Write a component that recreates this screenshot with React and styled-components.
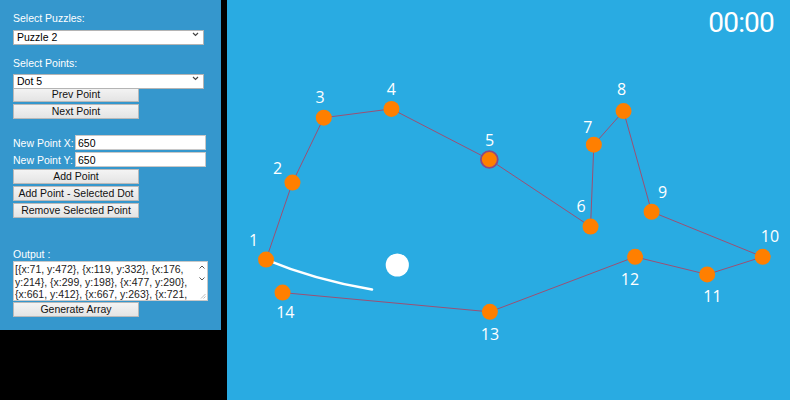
import React, { useState } from "react";
import styled, { createGlobalStyle } from "styled-components";

const GlobalStyle = createGlobalStyle`
  html, body {
    margin: 0;
    padding: 0;
    background: #000;
  }
  body {
    font-family: "Liberation Sans", Arial, sans-serif;
  }
`;

const SCALE = 0.55;

// original canvas coordinates, label positions are on-screen (canvas space)
const dots = [
  { x: 71, y: 472, lx: 26.5, ly: 246 },
  { x: 119, y: 332, lx: 50.5, ly: 174 },
  { x: 176, y: 214, lx: 93, ly: 103 },
  { x: 299, y: 198, lx: 164.3, ly: 95 },
  { x: 477, y: 290, lx: 262.5, ly: 145.7 },
  { x: 661, y: 412, lx: 354, ly: 211.7 },
  { x: 667, y: 263, lx: 360.8, ly: 132.7 },
  { x: 721, y: 202, lx: 394.5, ly: 95 },
  { x: 772, y: 385, lx: 435.5, ly: 198.3 },
  { x: 974, y: 467, lx: 543, ly: 241.7 },
  { x: 873, y: 499, lx: 485.5, ly: 301.7 },
  { x: 742, y: 467, lx: 403, ly: 285 },
  { x: 478, y: 567, lx: 263, ly: 340 },
  { x: 101, y: 532, lx: 58.3, ly: 318.3 },
];

const outputText =
  "[" + dots.map((d) => `{x:${d.x}, y:${d.y}}`).join(", ") + "]";

const Page = styled.div`
  display: flex;
  align-items: flex-start;
  gap: 6px;
  width: 790px;
  height: 400px;
  overflow: hidden;
`;

const Panel = styled.div`
  width: 221px;
  flex-shrink: 0;
  background: #3597cd;
  box-sizing: border-box;
  padding: 11px 0 13px 13px;
  display: flex;
  flex-direction: column;
  align-items: flex-start;
`;

const Label = styled.label`
  display: block;
  color: #fff;
  font-size: 10.5px;
  line-height: 14px;
  height: 14px;
  margin-top: ${(p) => p.$top || 0}px;
`;

const SelectWrap = styled.div`
  position: relative;
  width: 191px;
  height: 15px;
  margin-top: ${(p) => p.$top || 0}px;
`;

const Select = styled.select`
  appearance: none;
  width: 100%;
  height: 100%;
  box-sizing: border-box;
  border: 1px solid #b4b4b4;
  border-radius: 0;
  background: #fff;
  font-family: "Liberation Sans", Arial, sans-serif;
  font-size: 10.5px;
  color: #000;
  padding: 0 0 0 3px;
  outline: none;
`;

const Chevron = styled.svg`
  position: absolute;
  right: 5px;
  top: 5px;
  pointer-events: none;
`;

const Button = styled.button`
  width: 126px;
  height: 15px;
  box-sizing: border-box;
  margin-top: ${(p) => p.$top || 0}px;
  padding: 0;
  border: 1px solid #b9b9b9;
  background: linear-gradient(#f4f4f4, #e4e4e4);
  font-family: "Liberation Sans", Arial, sans-serif;
  font-size: 10.5px;
  line-height: 13px;
  color: #111;
  cursor: pointer;
`;

const FieldRow = styled.div`
  display: flex;
  align-items: center;
  margin-top: ${(p) => p.$top || 0}px;
`;

const RowLabel = styled.span`
  width: 62px;
  color: #fff;
  font-size: 10.5px;
`;

const TextInput = styled.input`
  width: 131px;
  height: 15px;
  box-sizing: border-box;
  border: 1px solid #c8c8c8;
  padding: 0 2px;
  font-family: "Liberation Sans", Arial, sans-serif;
  font-size: 10.5px;
  color: #000;
  outline: none;
`;

const OutputBox = styled.div`
  display: flex;
  width: 195px;
  height: 40px;
  box-sizing: border-box;
  border: 1px solid #c8c8c8;
  background: #fff;
`;

const OutputText = styled.textarea`
  flex: 1;
  border: none;
  resize: none;
  overflow: hidden;
  padding: 1px 0 0 1px;
  font-family: "Liberation Sans", Arial, sans-serif;
  font-size: 10.5px;
  line-height: 12.6px;
  color: #222;
  outline: none;
`;

const ScrollRail = styled.div`
  width: 10px;
  display: flex;
  flex-direction: column;
  align-items: center;
  padding-top: 3px;
  gap: 8px;
  position: relative;
`;

const Grip = styled.svg`
  position: absolute;
  right: 1px;
  bottom: 1px;
`;

const Stage = styled.div`
  position: relative;
  width: 563px;
  height: 400px;
  flex-shrink: 0;
  background: #29abe2;
`;

const Timer = styled.div`
  position: absolute;
  top: 6px;
  right: 16px;
  color: #fff;
  font-family: Roboto, "Open Sans", sans-serif;
  font-weight: 400;
  font-size: 28px;
  letter-spacing: -0.8px;
`;

const Board = styled.svg`
  display: block;
`;

const DotLabel = styled.text`
  fill: #fff;
  font-family: "Open Sans", Roboto, sans-serif;
  font-size: 16px;
  text-anchor: middle;
`;

function DropSelect({ top, value, options }) {
  return (
    <SelectWrap $top={top}>
      <Select defaultValue={value}>
        {options.map((o) => (
          <option key={o}>{o}</option>
        ))}
      </Select>
      <Chevron width="7" height="5" viewBox="0 0 7 5">
        <path d="M1 1 L3.5 3.5 L6 1" fill="none" stroke="#444" strokeWidth="1.2" />
      </Chevron>
    </SelectWrap>
  );
}

export default function App() {
  const [px, setPx] = useState("650");
  const [py, setPy] = useState("650");
  const selected = 4;

  const pts = dots.map((d) => ({ ...d, sx: d.x * SCALE, sy: d.y * SCALE }));
  const path = pts.map((p, i) => `${i ? "L" : "M"}${p.sx} ${p.sy}`).join(" ");

  return (
    <Page>
      <GlobalStyle />
      <Panel>
        <Label>Select Puzzles:</Label>
        <DropSelect top={2} value="Puzzle 2" options={["Puzzle 1", "Puzzle 2", "Puzzle 3"]} />
        <Label $top={14}>Select Points:</Label>
        <DropSelect top={1} value="Dot 5" options={dots.map((_, i) => `Dot ${i + 1}`)} />
        <Button $top={1}>Prev Point</Button>
        <Button $top={2}>Next Point</Button>

        <FieldRow $top={16}>
          <RowLabel>New Point X:</RowLabel>
          <TextInput value={px} onChange={(e) => setPx(e.target.value)} />
        </FieldRow>
        <FieldRow $top={2}>
          <RowLabel>New Point Y:</RowLabel>
          <TextInput value={py} onChange={(e) => setPy(e.target.value)} />
        </FieldRow>
        <Button $top={2}>Add Point</Button>
        <Button $top={2}>Add Point - Selected Dot</Button>
        <Button $top={2}>Remove Selected Point</Button>

        <Label $top={29}>Output :</Label>
        <OutputBox>
          <OutputText readOnly value={outputText} />
          <ScrollRail>
            <svg width="6" height="4" viewBox="0 0 6 4">
              <path d="M0.5 3.5 L3 1 L5.5 3.5" fill="none" stroke="#555" strokeWidth="1" />
            </svg>
            <svg width="6" height="4" viewBox="0 0 6 4">
              <path d="M0.5 0.5 L3 3 L5.5 0.5" fill="none" stroke="#555" strokeWidth="1" />
            </svg>
            <Grip width="6" height="6" viewBox="0 0 6 6">
              <path d="M5.5 1 L1 5.5 M5.5 3.5 L3.5 5.5" stroke="#aaa" strokeWidth="0.8" />
            </Grip>
          </ScrollRail>
        </OutputBox>
        <Button $top={1}>Generate Array</Button>
      </Panel>

      <Stage>
        <Board width="563" height="400" viewBox="0 0 563 400">
          <path d={path} fill="none" stroke="#9c5074" strokeWidth="1" />
          <path
            d="M39 259.6 Q88 280 145 289.5"
            fill="none"
            stroke="#fff"
            strokeWidth="2.6"
            strokeLinecap="round"
          />
          <circle cx="170.3" cy="265" r="11.6" fill="#fff" />
          {pts.map((p, i) => (
            <circle
              key={i}
              cx={p.sx}
              cy={p.sy}
              r={i === selected ? 8.4 : 8}
              fill="#ff7f00"
              stroke={i === selected ? "#8e4a82" : "none"}
              strokeWidth={i === selected ? 1.8 : 0}
            />
          ))}
          {pts.map((p, i) => (
            <DotLabel key={i} x={p.lx} y={p.ly}>
              {i + 1}
            </DotLabel>
          ))}
        </Board>
        <Timer>00:00</Timer>
      </Stage>
    </Page>
  );
}
